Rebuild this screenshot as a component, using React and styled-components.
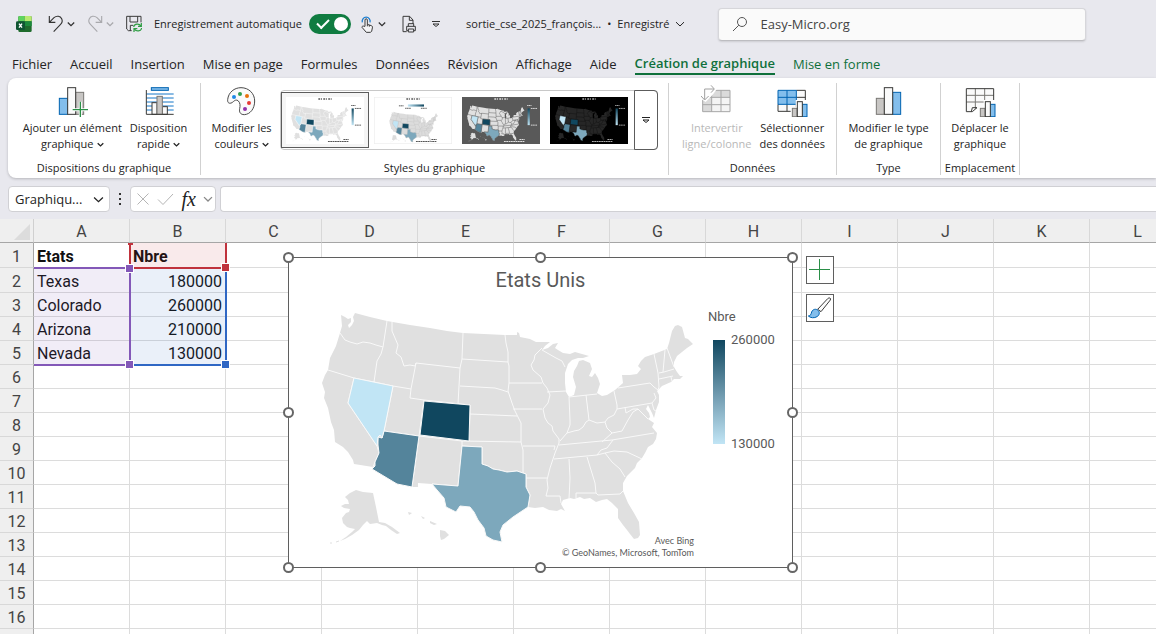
import React from "react";
import styled, { createGlobalStyle, css } from "styled-components";

const UI = `"Open Sans", "Noto Sans", sans-serif`;
const GRID = `Roboto, "Liberation Sans", sans-serif`;
const GREEN = "#0f703b";

const Global = createGlobalStyle`
  * { box-sizing: border-box; }
  html, body { margin: 0; padding: 0; }
  body { background: #e8e8ee; color: #242424; font: 11px/16px ${UI}; }
  button, input { font: inherit; color: inherit; margin: 0; }
  button { background: none; border: 0; padding: 0; }
`;

const Window = styled.div`
  display: flex;
  flex-direction: column;
  height: 100vh;
  overflow: hidden;
`;

/* ---------- title bar ---------- */

const TitleBar = styled.header`
  display: flex;
  align-items: center;
  height: 48px;
  padding: 0 16px;
`;

const QuickAccess = styled.div`
  display: flex;
  align-items: center;
  gap: 12px;
  margin-left: 16px;
`;

const ToolPair = styled.div`
  display: flex;
  align-items: center;
  gap: 3px;
  color: ${(p) => (p.$disabled ? "#a9a9ad" : "#333")};
`;

const IconButton = styled.button`
  display: flex;
  align-items: center;
  justify-content: center;
  height: 24px;
`;

const AutoSave = styled.label`
  display: flex;
  align-items: center;
  gap: 7px;
  white-space: nowrap;
`;

const Switch = styled.input`
  appearance: none;
  width: 42px;
  height: 20px;
  border-radius: 10px;
  background: #107c41;
  display: flex;
  align-items: center;
  justify-content: space-between;
  padding: 0 3px 0 8px;
  &::before {
    content: "";
    width: 10px;
    height: 5px;
    border-left: 2px solid #fff;
    border-bottom: 2px solid #fff;
    transform: rotate(-45deg);
    margin-top: -4px;
  }
  &::after {
    content: "";
    width: 14px;
    height: 14px;
    border-radius: 50%;
    background: #fff;
  }
`;

const MoreTools = styled.div`
  display: flex;
  align-items: center;
  gap: 15px;
  margin-left: 8px;
  color: #333;
`;

const FileName = styled.button`
  display: flex;
  align-items: center;
  gap: 6px;
  margin-left: 26px;
  white-space: nowrap;
`;

const SearchBox = styled.label`
  display: flex;
  align-items: center;
  gap: 12px;
  flex: 0 1 368px;
  height: 33px;
  margin-left: 33px;
  padding: 0 13px;
  background: #fafafa;
  border: 1px solid #d6d6da;
  border-bottom-color: #bdbdc1;
  border-radius: 4px;
  box-shadow: 0 1px 2px rgba(0, 0, 0, 0.12);
  input {
    flex: 1;
    min-width: 0;
    border: 0;
    background: none;
    padding: 0;
    outline: 0;
    font-size: 13px;
    color: #444;
  }
`;

/* ---------- tabs ---------- */

const Tabs = styled.nav`
  display: flex;
  gap: 18px;
  height: 30px;
  padding: 4px 12px 0;
`;

const Tab = styled.button`
  height: 23px;
  font-size: 13px;
  line-height: 22px;
  white-space: nowrap;
  color: ${(p) => (p.$context ? GREEN : "#242424")};
  ${(p) =>
    p.$active &&
    css`
      font-weight: 600;
      border-bottom: 2px solid ${GREEN};
    `}
`;

/* ---------- ribbon ---------- */

const Ribbon = styled.section`
  display: flex;
  height: 100px;
  margin-left: 8px;
  padding: 5px 0 2px;
  background: #fff;
  border-radius: 8px 0 0 8px;
  box-shadow: 0 1px 3px rgba(0, 0, 0, 0.22);
  flex: none;
`;

const Group = styled.div`
  display: flex;
  flex-direction: column;
  flex: none;
  width: ${(p) => p.$w}px;
  height: 92px;
  border-right: 1px solid #d1d1d1;
`;

const GroupTools = styled.div`
  display: flex;
  flex: none;
  justify-content: center;
  align-items: flex-start;
  gap: 8px;
  height: 78px;
  padding-left: ${(p) => p.$inset || 0}px;
`;

const GroupName = styled.div`
  line-height: 14px;
  text-align: center;
  white-space: nowrap;
`;

const Tool = styled.button`
  display: flex;
  flex-direction: column;
  align-items: center;
  gap: 3px;
  padding-top: 2px;
  line-height: 16px;
  white-space: nowrap;
  color: ${(p) => (p.disabled ? "#b8b8b8" : "#242424")};
  span { text-align: center; }
`;

const Gallery = styled.div`
  display: flex;
  height: 60px;
  margin-top: 7px;
  border: 1px solid #c8c8c8;
  border-radius: 4px;
`;

const StyleItem = styled.button`
  display: flex;
  align-items: center;
  justify-content: center;
  width: 88px;
  height: 56px;
  margin-top: 1px;
  border: 1px solid ${(p) => (p.$selected ? "#5c5c5c" : "transparent")};
  background: ${(p) => (p.$selected ? "#f5f5f5" : "none")};
`;

const GalleryMore = styled.button`
  display: flex;
  align-items: center;
  justify-content: center;
  width: 24px;
  margin: -1px -1px -1px 1px;
  border: 1px solid #5c5c5c;
  border-radius: 0 4px 4px 0;
`;

/* ---------- formula bar ---------- */

const FormulaBar = styled.div`
  display: flex;
  align-items: flex-start;
  height: 41px;
  padding: 8px 0 0 8px;
  flex: none;
`;

const Field = styled.div`
  display: flex;
  align-items: center;
  height: 26px;
  background: #fff;
  border: 1px solid #d0d0d4;
  border-radius: 4px;
`;

const NameBox = styled(Field)`
  width: 102px;
  padding: 0 5px 0 6px;
  input {
    flex: 1;
    min-width: 0;
    border: 0;
    padding: 0;
    background: none;
    outline: 0;
    font-size: 13px;
  }
`;

const Grip = styled.div`
  display: flex;
  align-items: center;
  height: 26px;
  padding: 0 8px 0 9px;
`;

const EntryTools = styled(Field)`
  width: 86px;
  padding: 0 2px 0 5px;
  justify-content: space-between;
  margin-right: 4px;
`;

const FxLabel = styled.i`
  font: italic 400 20px/20px "Liberation Serif", serif;
  color: #222;
`;

const FormulaInput = styled.input`
  flex: 1;
  min-width: 0;
  height: 26px;
  border: 1px solid #d0d0d4;
  border-right: 0;
  border-radius: 4px 0 0 4px;
  background: #fff;
  outline: 0;
`;

/* ---------- sheet ---------- */

const SheetArea = styled.main`
  position: relative;
  flex: 1;
  min-height: 0;
  overflow: hidden;
  background: #fff;
`;

const Sheet = styled.table`
  table-layout: fixed;
  border-collapse: separate;
  border-spacing: 0;
  width: 1186px;
  font: 16px/21px ${GRID};
  color: #111;
  col { width: 96px; }
  col:first-child { width: 34px; }
  tr { height: 24px; }
  tbody tr:nth-child(-n + 2) { height: 25px; }
  th, td { padding: 2px 0 0; }
`;

const ColHead = styled.th`
  font-weight: 400;
  color: #444;
  background: #efefef;
  border-right: 1px solid #d8d8d8;
  border-bottom: 1px solid #a6a6a6;
`;

const Corner = styled(ColHead)`
  border-right-color: #d0d0d0;
  svg { display: block; margin: 0 0 0 14px; }
`;

const RowHead = styled.th`
  font-weight: 400;
  color: #444;
  background: #efefef;
  border-right: 1px solid #a6a6a6;
  border-bottom: 1px solid #d8d8d8;
`;

const Cell = styled.td`
  && { padding: 2px 3px 0; }
  border-right: 1px solid #dcdcdc;
  border-bottom: 1px solid #dcdcdc;
  text-align: ${(p) => (p.$number ? "right" : "left")};
  font-weight: ${(p) => (p.$bold ? 700 : 400)};
`;

const Range = styled.div`
  position: absolute;
  left: ${(p) => p.$x}px;
  top: ${(p) => p.$y}px;
  width: ${(p) => p.$w}px;
  height: ${(p) => p.$h}px;
  background: ${(p) => p.$tint};
  border: 2px solid ${(p) => p.$color};
  border-width: ${(p) => p.$sides};
  &::after {
    content: "";
    position: absolute;
    right: -5px;
    bottom: -5px;
    width: 7px;
    height: 7px;
    border: 1px solid #fff;
    background: ${(p) => p.$color};
  }
  &::before {
    content: "";
    position: absolute;
    width: 5px;
    height: 5px;
    background: ${(p) => p.$color};
    ${(p) => p.$knob};
  }
`;

/* ---------- chart object ---------- */

const Chart = styled.figure`
  position: absolute;
  left: 288px;
  top: 38px;
  width: 505px;
  height: 311px;
  margin: 0;
  background: #fff;
  border: 1px solid #5f5f5f;
  font-family: ${GRID};
  color: #595959;
`;

const ChartTitle = styled.figcaption`
  height: 48px;
  padding-top: 10px;
  font-size: 20px;
  line-height: 24px;
  text-align: center;
`;

const ChartBody = styled.div`
  display: flex;
  gap: 12px;
  padding-left: 27px;
  svg { display: block; }
`;

const Legend = styled.div`
  padding-top: 3px;
  font-size: 13px;
  line-height: 16px;
`;

const Scale = styled.div`
  display: flex;
  gap: 6px;
  height: 120px;
  margin: 7px 0 0 5px;
`;

const ScaleBar = styled.div`
  width: 12px;
  margin: 8px 0;
  background: linear-gradient(#10475f, #80a9bd 62%, #c1e5f5);
`;

const ScaleLabels = styled.div`
  display: flex;
  flex-direction: column;
  justify-content: space-between;
`;

const Credits = styled.div`
  position: absolute;
  right: 98px;
  bottom: 8px;
  font-family: Lato, ${GRID};
  font-size: 9px;
  line-height: 12px;
  text-align: right;
`;

const HandleFrame = styled.div`
  position: absolute;
  inset: -1px 0 0 -1px;
`;

const Handle = styled.span`
  position: absolute;
  left: ${(p) => p.$x}%;
  top: ${(p) => p.$y}%;
  width: 11px;
  height: 11px;
  margin: -5px 0 0 -5px;
  border: 2px solid #666;
  border-radius: 50%;
  background: #fff;
`;

const ChartButtons = styled.div`
  position: absolute;
  left: 806px;
  top: 37px;
  display: flex;
  flex-direction: column;
  gap: 10px;
`;

const ChartButton = styled.button`
  display: flex;
  align-items: center;
  justify-content: center;
  width: 28px;
  height: 28px;
  background: #fff;
  border: 1px solid #5f5f5f;
`;

/* ---------- drawings ---------- */

const LAND =
  "M341 315L345 317 348 319 351 318 351 322 348 325 349 328 352 325 354 321 353 317 355 313 370 317 387 321 410 325 430 328 447 331 463 333 484 334 505 335 517 335 517 332 519 333 520 337 525 338 530 339 536 342 542 342 550 342 545 346 542 350 548 348 553 344 558 343 555 348 558 350 563 353 570 354 575 352 582 354 589 356 583 358 578 358 572 360 568 364 565 373 565 383 566 392 569 397 574 395 576 387 573 377 574 371 577 366 579 361 583 360 590 363 592 369 589 376 592 377 595 373 598 378 600 384 597 393 602 396 607 395 615 390 623 383 622 375 630 375 637 374 641 369 638 366 641 361 645 357 654 354 667 349 669 343 672 331 675 326 678 325 682 327 685 338 688 339 693 344 687 348 682 352 677 356 674 362 674 367 677 372 680 376 683 376 680 379 674 379 671 382 662 386 657 391 659 395 659 402 656 410 654 418 652 413 649 407 648 405 646 409 649 413 650 417 648 419 654 423 652 427 657 433 656 439 653 444 648 447 645 453 642 458 637 463 635 468 627 476 623 483 623 491 628 503 634 513 639 522 640 535 638 538 634 539 630 534 627 530 623 525 618 518 618 509 612 503 607 499 602 500 596 502 590 498 584 499 580 497 574 499 570 498 563 500 561 504 565 511 561 509 557 511 549 510 543 507 535 508 528 507 513 517 503 525 500 532 502 542 493 540 486 536 484 528 478 520 474 512 470 507 460 506 456 512 446 507 444 498 437 490 432 484 418 483 418 487 412 487 397 484 372 469 373 467 354 464 353 460 348 452 343 447 335 442 334 430 331 422 328 408 324 398 325 392 322 383 325 375 328 370 330 358 336 346 340 333 342 326Z";

const ALASKA =
  "M345 497L350 493 356 490 363 492 373 493 376 507 379 522 385 523 392 527 400 533 397 534 391 530 386 526 382 525 377 523 370 524 367 521 363 525 359 530 352 535 345 539 340 541 346 537 352 532 355 529 350 528 347 527 343 523 342 518 346 513 349 512 350 509 344 508 341 506 345 504 349 504 348 500Z";

const HAWAII =
  "M408 512l4 1-3 2zM421 516l4 2-2 1zM430 521l7 3-3 1-4-2zM440 530l5 1 4 4-5 4-3 1-1-4z";

const BORDERS = [
  "M340 333L345 340 350 342 357 344 363 342 370 343 376 345 383 347",
  "M387 321L383 347 381 354 377 361 374 382",
  "M328 370L354 378 374 382 393 386 411 389",
  "M392 322L392 331 395 338 398 345 396 353 401 357 404 366 410 365 415 366 416 363",
  "M416 363L460 368M416 363L411 389 410 398 424 400 470 405",
  "M463 333L462 359 460 368 458 404M462 359L508 362",
  "M505 335L506 343 508 352 508 362 509 366 509 383 508 391 512 403 515 411 518 417 521 423 521 442",
  "M460 386L495 388 502 390 508 392M509 383L542 383M470 405L470 414 517 416M513 409L542 409",
  "M470 414L469 441M462 441L521 442M521 442L523 450 523 473M462 441L462 446M523 446L555 446 554 450",
  "M393 386L384 431M424 400L419 436M384 431L419 436 462 441M419 436L412 487M462 446L458 486 432 484",
  "M348 403L354 378M348 403L377 446 379 453 375 462 373 467",
  "M462 446L482 447 482 464 488 466 493 469 499 470 507 472 517 471 526 474 526 487 530 495 528 507",
  "M526 478L547 478",
  "M542 348L535 355 534 360 531 365 533 370 541 377 543 383 547 388 550 395 548 403 543 409 545 418 548 423 552 426 553 431 559 439 559 443 555 453 550 468 547 480 548 488 546 496 560 496 561 503",
  "M542 350L556 358 562 361 565 367M547 392L566 391M569 397L597 394M569 397L570 420 570 425 567 433 560 441M586 395L589 420",
  "M567 433L574 431 579 430 583 427 586 422 589 420 597 423 605 422 608 418 614 415 617 409 617 405 614 391",
  "M605 422L607 428 612 433 602 442M559 445L612 440 654 433M554 459L597 455 605 453 614 451 627 452 642 459",
  "M597 455L601 450 607 448 613 440M569 459L570 478 569 499M587 457L595 483 596 493M576 498L576 493 596 493 598 495 620 494 623 491",
  "M605 453L612 462 620 469 625 477M612 433L622 431 628 420 633 412 638 409 643 414 648 419M617 409L652 403 654 410 656 411M625 407L626 413 633 409 638 409",
  "M618 388L650 383 654 387 658 390M652 403L656 398 654 393M654 354L658 373 659 387 658 390M659 373L664 372 674 369M665 350L663 372M667 348L674 367M659 379L673 376M671 377L672 381",
].join("");

const NEVADA =
  "M354 378L393 386 384 431 382 438 380 435 378 437 377 446 348 403Z";
const COLORADO = "M424 401L470 405 469 441 420 435Z";
const ARIZONA =
  "M384 431L419 436 412 487 397 484 372 469 375 466 375 462 379 453 378 445 378 437 382 438Z";
const TEXAS =
  "M462 446L482 447 482 464 488 466 493 469 499 470 507 472 517 471 526 474 526 487 530 495 528 507 513 517 503 525 500 532 502 542 493 540 486 536 484 528 478 520 474 512 470 507 460 506 456 512 446 507 444 498 437 490 432 484 458 486Z";

function UsMap({ land = "#e0e0e0", line = "#f9f9f9", thickness = 1 }) {
  return (
    <g strokeLinejoin="round" stroke={line} strokeWidth={thickness}>
      <path d={LAND} fill={land} stroke="none" />
      <path d={ALASKA + HAWAII} fill={land} stroke="none" />
      <path d={BORDERS} fill="none" />
      <path d="M330 543l2 0M336 542l3-1" stroke={land} />
      <path d={TEXAS} fill="#7da8bc" />
      <path d={ARIZONA} fill="#54849b" />
      <path d={COLORADO} fill="#10475f" />
      <path d={NEVADA} fill="#c1e5f5" />
    </g>
  );
}

function Thumb({ back = "#fff", ink = "#555", land, line, thickness = 3, wide }) {
  const ramp = wide ? "rampWide" : "rampTall";
  return (
    <svg width="78" height="47" viewBox="289 258 504 304" preserveAspectRatio="none" aria-hidden="true">
      <defs>
        <linearGradient id={ramp} x1="0" y1="0" x2={wide ? 1 : 0} y2={wide ? 0 : 1}>
          <stop offset="0" stopColor={wide ? "#c1e5f5" : "#10475f"} />
          <stop offset="1" stopColor={wide ? "#10475f" : "#c1e5f5"} />
        </linearGradient>
      </defs>
      <rect x="289" y="258" width="504" height="304" fill={back} />
      {wide && <rect x="291" y="260" width="500" height="300" fill="none" stroke="#eee" strokeWidth="5" />}
      <g stroke={ink} fill="none">
        <path d="M498 271h86" strokeWidth="9" strokeDasharray="11 5 7 9" />
        <path d="M660 533h34M560 546h134" strokeWidth="7" strokeDasharray="12 3" />
        {wide ? (
          <path d="M450 315h30M490 331h38M592 331h38" strokeWidth="6" strokeDasharray="9 2" />
        ) : (
          <path d="M710 313h28M734 332h40M734 440h40" strokeWidth="6" strokeDasharray="9 2" />
        )}
      </g>
      {wide ? (
        <rect x="508" y="306" width="104" height="14" fill="url(#rampWide)" />
      ) : (
        <rect x="713" y="332" width="14" height="108" fill="url(#rampTall)" />
      )}
      <g transform={wide ? "translate(114 88) scale(.85)" : undefined}>
        <UsMap land={land} line={line} thickness={thickness} />
      </g>
    </svg>
  );
}

const Chevron = ({ w = 8, color = "currentColor", thick = 1.3 }) => (
  <svg width={w} height={w} viewBox="0 0 8 8" fill="none" stroke={color} strokeWidth={(thick * 8) / w} aria-hidden="true">
    <path d="M.8 2.5L4 5.6 7.2 2.5" />
  </svg>
);

const Inline = styled.i`
  display: inline-block;
  margin-left: 3px;
  line-height: 8px;
`;
const Drop = () => (
  <Inline>
    <Chevron w={7} />
  </Inline>
);

const ExcelLogo = () => (
  <svg width="16" height="16" viewBox="0 0 48 48" role="img" aria-label="Excel">
    <rect x="7" y="0" width="40" height="48" rx="4" fill="#1f6b2c" />
    <path d="M11 0h15v16H7V4a4 4 0 0 1 4-4z" fill="#5fd35f" />
    <path d="M26 0h17a4 4 0 0 1 4 4v12H26z" fill="#b9ea70" />
    <path d="M26 16h21v14H26z" fill="#1c8a3c" />
    <rect x="0" y="16" width="27" height="26" rx="4" fill="#0f5532" />
    <path d="M9 23l9 12M18 23L9 35" stroke="#fff" strokeWidth="4" />
  </svg>
);

const Undo = ({ flip }) => (
  <svg width="16" height="18" viewBox="0 0 48 54" fill="none" stroke="currentColor" strokeWidth="3.4" aria-hidden="true">
    <g transform={flip ? "translate(48 0) scale(-1 1)" : undefined}>
      <path d="M4 3v19h18M4 22L18 8C26 1 37 3 41 11c4 8 1 13-4 18L17 50" />
    </g>
  </svg>
);

const SaveIcon = () => (
  <svg width="16" height="18" viewBox="0 0 48 54" fill="none" strokeWidth="3" aria-hidden="true">
    <path d="M17 47H7l-5-5V4h43v18M12 4v17h23V4M13 47V31h9" stroke="#3a3a3a" />
    <path d="M23 36c2-10 16-12 22-3M46 24v10H36M47 39c-2 10-16 12-22 3M24 51V41h10" stroke="#2f9e44" strokeWidth="3.6" />
  </svg>
);

const TouchIcon = () => (
  <svg width="16" height="18" viewBox="0 0 48 54" fill="none" strokeWidth="3" aria-hidden="true">
    <path d="M10 22a12 12 0 1 1 23 0" stroke="#1e7fd0" strokeWidth="4" />
    <path d="M18 34V15c0-5 7-5 7 0v13l12 4c3 1 4 3 3 7l-2 10-4 3H22L9 37c-1-4 5-5 9-2M25 28v6M31 30v5" stroke="#3a3a3a" fill="#f4f4f6" />
  </svg>
);

const PrintIcon = () => (
  <svg width="16" height="18" viewBox="0 0 48 54" fill="none" stroke="#3a3a3a" strokeWidth="3" aria-hidden="true">
    <path d="M17 50H6V4h20l10 11v12M25 4v12h11M22 34v-8h16v8M22 47h-5V34h26v13h-5M22 42h16v9H22z" />
  </svg>
);

const blue = { fill: "#83beec", stroke: "#0063b1" };
const grey = { fill: "#c8c6c4", stroke: "#797774" };
const white = { fill: "#fafafa", stroke: "#3a3a38" };

const Glyph = ({ children }) => (
  <svg width="32" height="32" viewBox="0 0 96 96" fill="none" strokeWidth="3" aria-hidden="true">
    {children}
  </svg>
);

const MiniBars = () => (
  <>
    <path d="M44 96V66h15V45h40v55" fill="#fff" />
    <rect x="49" y="70" width="14" height="25" {...grey} />
    <rect x="79" y="58" width="14" height="37" {...blue} />
    <rect x="64" y="50" width="15" height="45" {...white} />
  </>
);

const AddElementIcon = () => (
  <Glyph>
    <rect x="10" y="40" width="25" height="48" {...blue} />
    <rect x="59" y="22" width="24" height="66" {...grey} />
    <rect x="35" y="8" width="24" height="80" {...white} />
    <path d="M73 50v46M50 74h46" stroke="#fff" strokeWidth="9" />
    <path d="M73 50v46M50 74h46" stroke="#2a8f47" strokeWidth="4" />
  </Glyph>
);

const LayoutIcon = () => (
  <Glyph>
    <path d="M10 27h82M10 39h82M10 51h82M10 63h82M10 75h82" stroke="#1477c8" />
    <rect x="25" y="8" width="51" height="8" {...blue} />
    <rect x="27" y="53" width="15" height="35" {...white} />
    <rect x="58" y="65" width="15" height="23" {...white} />
    <rect x="42" y="34" width="16" height="54" {...grey} />
    <path d="M10 15v73h82" stroke="#3a3a38" />
  </Glyph>
);

const PaletteIcon = () => (
  <Glyph>
    <path
      d="M8 44C10 22 28 8 48 8c24 0 41 18 41 40 0 24-14 40-31 41-13 0-16-9-14-18 2-9 2-18-5-24-8-5-12 2-18 6-8 4-14 1-13-9z"
      fill="#fafafa"
      stroke="#4a4a4a"
    />
    <circle cx="27" cy="36" r="6" fill="#1e88e5" />
    <circle cx="45" cy="27" r="6" fill="#2e9e4f" />
    <circle cx="66" cy="33" r="6" fill="#e8710a" />
    <circle cx="72" cy="54" r="6" fill="#e53935" />
    <circle cx="60" cy="72" r="6" fill="#9031aa" />
  </Glyph>
);

const SwapIcon = () => (
  <Glyph>
    <path d="M5 16h82v64H5z" fill="#f4f4f4" />
    <path d="M5 16h82v21H32v43H5z" fill="#dadada" />
    <path d="M5 16h82v64H5zM5 37h82M5 59h82M32 16v64M60 16v64" stroke="#a6a6a6" />
    <path d="M-2-2h40l9 15-10 14L14 51l-16-10z" fill="#fff" />
    <path d="M11 43V12h28M0 33l11 12 12-12M30 1l10 11-10 11" stroke="#a0a0a0" />
  </Glyph>
);

const SelectDataIcon = () => (
  <Glyph>
    <path d="M6 16h82v63H6z" fill="#fafafa" />
    <path d="M6 16h55v42H6z" fill="#83beec" />
    <path d="M61 16h27v63H6V58M61 37h27M33 58v21M61 58v21" stroke="#3a3a38" />
    <path d="M6 16h55v42H6zM6 37h55M33 16v42" stroke="#0063b1" />
    <MiniBars />
  </Glyph>
);

const ChartTypeIcon = () => (
  <Glyph>
    <rect x="10" y="40" width="24" height="48" {...grey} />
    <rect x="59" y="22" width="24" height="66" {...blue} />
    <rect x="34" y="8" width="25" height="80" {...white} />
  </Glyph>
);

const MoveChartIcon = () => (
  <Glyph>
    <path d="M7 11h82v60H34l-10 9H7z" fill="#fafafa" />
    <path d="M7 31h82M7 51h82M34 11v60M62 11v60" stroke="#797774" />
    <path d="M89 71V11H7v69h18l14-12H25l-3 12" stroke="#3a3a38" />
    <MiniBars />
  </Glyph>
);

/* ---------- data ---------- */

const TABS = ["Fichier", "Accueil", "Insertion", "Mise en page", "Formules", "Données", "Révision", "Affichage", "Aide"];
const COLUMNS = "ABCDEFGHIJKL".split("");
const DATA = [
  ["Etats", "Nbre"],
  ["Texas", 180000],
  ["Colorado", 260000],
  ["Arizona", 210000],
  ["Nevada", 130000],
];
const HANDLES = [[0, 0], [50, 0], [100, 0], [0, 50], [100, 50], [0, 100], [50, 100], [100, 100]];

export default function App() {
  return (
    <Window>
      <Global />
      <TitleBar>
        <ExcelLogo />
        <QuickAccess>
          <ToolPair>
            <IconButton aria-label="Annuler"><Undo /></IconButton>
            <IconButton aria-label="Options d'annulation"><Chevron /></IconButton>
          </ToolPair>
          <ToolPair $disabled>
            <IconButton disabled aria-label="Rétablir"><Undo flip /></IconButton>
            <IconButton disabled aria-label="Options de rétablissement"><Chevron /></IconButton>
          </ToolPair>
          <IconButton aria-label="Enregistrer"><SaveIcon /></IconButton>
          <AutoSave>
            Enregistrement automatique
            <Switch type="checkbox" role="switch" defaultChecked />
          </AutoSave>
        </QuickAccess>
        <MoreTools>
          <ToolPair>
            <IconButton aria-label="Mode tactile"><TouchIcon /></IconButton>
            <IconButton aria-label="Options tactiles"><Chevron /></IconButton>
          </ToolPair>
          <IconButton aria-label="Aperçu et impression"><PrintIcon /></IconButton>
          <IconButton aria-label="Personnaliser la barre">
            <svg width="8" height="8" viewBox="0 0 8 8" fill="none" stroke="currentColor" aria-hidden="true">
              <path d="M0 1.5h8M1 4l3 2.5L7 4z" />
            </svg>
          </IconButton>
        </MoreTools>
        <FileName>
          <span>sortie_cse_2025_françois...</span>
          <span>•</span>
          <span>Enregistré</span>
          <Chevron w={10} thick={1} />
        </FileName>
        <SearchBox>
          <svg width="16" height="16" viewBox="0 0 16 16" fill="none" stroke="#555" aria-hidden="true">
            <circle cx="10" cy="6" r="4.5" />
            <path d="M6.8 9.2L1 15" />
          </svg>
          <input type="text" defaultValue="Easy-Micro.org" aria-label="Rechercher" />
        </SearchBox>
      </TitleBar>

      <Tabs>
        {TABS.map((t) => (
          <Tab key={t}>{t}</Tab>
        ))}
        <Tab $context $active>Création de graphique</Tab>
        <Tab $context>Mise en forme</Tab>
      </Tabs>

      <Ribbon>
        <Group $w={193}>
          <GroupTools $inset={2}>
            <Tool><AddElementIcon /><span>Ajouter un élément<br />graphique<Drop /></span></Tool>
            <Tool><LayoutIcon /><span>Disposition<br />rapide<Drop /></span></Tool>
          </GroupTools>
          <GroupName>Dispositions du graphique</GroupName>
        </Group>
        <Group $w={468}>
          <GroupTools>
            <Tool><PaletteIcon /><span>Modifier les<br />couleurs<Drop /></span></Tool>
            <Gallery>
              <StyleItem $selected aria-label="Style 1"><Thumb /></StyleItem>
              <StyleItem aria-label="Style 2"><Thumb wide land="#dcdcdc" line="#c4c4c4" /></StyleItem>
              <StyleItem aria-label="Style 3"><Thumb back="#595959" ink="#e0e0e0" line="#595959" /></StyleItem>
              <StyleItem aria-label="Style 4"><Thumb back="#000" ink="#aaa" land="#262626" line="#111" /></StyleItem>
              <GalleryMore aria-label="Autres styles">
                <svg width="8" height="8" viewBox="0 0 8 8" fill="none" stroke="#222" aria-hidden="true">
                  <path d="M0 1.5h8M1 4l3 2.5L7 4z" />
                </svg>
              </GalleryMore>
            </Gallery>
          </GroupTools>
          <GroupName>Styles du graphique</GroupName>
        </Group>
        <Group $w={168}>
          <GroupTools $inset={2}>
            <Tool disabled><SwapIcon /><span>Intervertir<br />ligne/colonne</span></Tool>
            <Tool><SelectDataIcon /><span>Sélectionner<br />des données</span></Tool>
          </GroupTools>
          <GroupName>Données</GroupName>
        </Group>
        <Group $w={104}>
          <GroupTools>
            <Tool><ChartTypeIcon /><span>Modifier le type<br />de graphique</span></Tool>
          </GroupTools>
          <GroupName>Type</GroupName>
        </Group>
        <Group $w={79}>
          <GroupTools>
            <Tool><MoveChartIcon /><span>Déplacer le<br />graphique</span></Tool>
          </GroupTools>
          <GroupName>Emplacement</GroupName>
        </Group>
      </Ribbon>

      <FormulaBar>
        <NameBox>
          <input type="text" defaultValue="Graphiqu..." aria-label="Zone Nom" />
          <IconButton aria-label="Liste des noms"><Chevron w={11} /></IconButton>
        </NameBox>
        <Grip>
          <svg width="3" height="12" viewBox="0 0 3 12" fill="#333" aria-hidden="true">
            <path d="M0 0h2v2H0zM0 5h2v2H0zM0 10h2v2H0z" />
          </svg>
        </Grip>
        <EntryTools>
          <IconButton aria-label="Annuler la saisie">
            <svg width="14" height="14" viewBox="0 0 14 14" fill="none" stroke="#b5b5b5"><path d="M1.500 1.500l11 11M12.500 1.500l-11 11" /></svg>
          </IconButton>
          <IconButton aria-label="Valider la saisie">
            <svg width="17" height="14" viewBox="0 0 17 14" fill="none" stroke="#b5b5b5"><path d="M1 7.500l5 5L16 2" /></svg>
          </IconButton>
          <IconButton aria-label="Insérer une fonction">
            <FxLabel>fx</FxLabel>
          </IconButton>
          <IconButton aria-label="Options de fonction"><Chevron w={10} color="#888" /></IconButton>
        </EntryTools>
        <FormulaInput type="text" aria-label="Barre de formule" />
      </FormulaBar>

      <SheetArea>
        <Sheet>
          <colgroup>
            <col />
            {COLUMNS.map((c) => <col key={c} />)}
          </colgroup>
          <thead>
            <tr>
              <Corner aria-label="Tout sélectionner">
                <svg width="16" height="16" viewBox="0 0 16 16" aria-hidden="true"><path d="M16 0v16H0z" fill="#dcdcdc" /></svg>
              </Corner>
              {COLUMNS.map((c) => <ColHead key={c}>{c}</ColHead>)}
            </tr>
          </thead>
          <tbody>
            {Array.from({ length: 16 }, (_, r) => (
              <tr key={r}>
                <RowHead>{r + 1}</RowHead>
                {COLUMNS.map((c, i) => {
                  const value = DATA[r] && DATA[r][i];
                  return (
                    <Cell key={c} $number={typeof value === "number"} $bold={r === 0}>{value}</Cell>
                  );
                })}
              </tr>
            ))}
            <tr>
              <RowHead />
              {COLUMNS.map((c) => <Cell key={c} />)}
            </tr>
          </tbody>
        </Sheet>

        <Range $x={130} $y={48} $w={97} $h={99} $color="#2f67c4" $tint="rgba(47,103,196,.1)" $sides="0 2px 2px 0" $knob="display: none" />
        <Range $x={129} $y={24} $w={98} $h={26} $color="#c0323c" $tint="rgba(192,50,60,.1)" $sides="0 2px 2px 2px" $knob="left: -3px; top: 0; height: 2px" />
        <Range $x={34} $y={48} $w={97} $h={99} $color="#8358b8" $tint="rgba(131,88,184,.11)" $sides="2px 2px 2px 0" $knob="right: -5px; top: -5px; border: 1px solid #fff; width: 7px; height: 7px" />

        <Chart>
          <ChartTitle>Etats Unis</ChartTitle>
          <ChartBody>
            <svg width="380" height="244" viewBox="316 306 380 244" role="img" aria-label="Carte des Etats Unis">
              <UsMap />
            </svg>
            <Legend>
              Nbre
              <Scale>
                <ScaleBar />
                <ScaleLabels>
                  <span>260000</span>
                  <span>130000</span>
                </ScaleLabels>
              </Scale>
            </Legend>
          </ChartBody>
          <Credits>Avec Bing<br />© GeoNames, Microsoft, TomTom</Credits>
          <HandleFrame>
            {HANDLES.map(([x, y]) => <Handle key={`${x}-${y}`} $x={x} $y={y} />)}
          </HandleFrame>
        </Chart>

        <ChartButtons>
          <ChartButton aria-label="Éléments de graphique">
            <svg width="22" height="22" viewBox="0 0 22 22" stroke="#2a8f47"><path d="M10.500 0v21M0 10.500h21" /></svg>
          </ChartButton>
          <ChartButton aria-label="Styles du graphique">
            <svg width="24" height="22" viewBox="0 0 72 66" fill="none" strokeWidth="3">
              <path d="M29 37L59 5c4-4 11-3 8 4L39 44z" fill="#fafafa" stroke="#3a3a3a" />
              <path d="M1 57c7-1 8-5 10-12 3-9 14-11 20-4 5 6 3 14-4 18-8 5-20 4-26-2z" fill="#83beec" stroke="#0063b1" />
            </svg>
          </ChartButton>
        </ChartButtons>
      </SheetArea>
    </Window>
  );
}
